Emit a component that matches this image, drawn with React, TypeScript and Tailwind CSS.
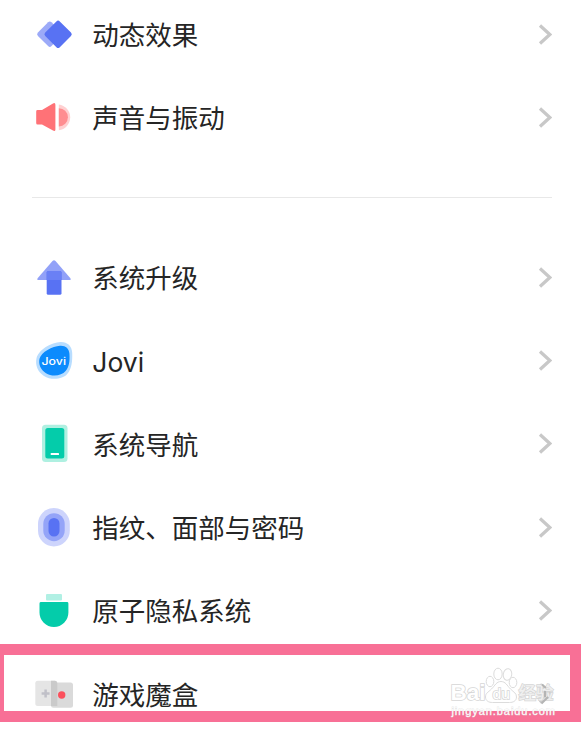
import * as React from 'react';

interface ISettingItem {
	id: number;
	name: string;
	icon: React.ReactNode;
}

interface ISettingGroupProps {
	items: ISettingItem[];
}

const MotionIcon = () => (
	<svg viewBox="0 0 40 40" className="w-10 h-10">
		<rect x="6.2" y="9.6" width="19.2" height="19.2" rx="2.4" fill="#9caaf8" transform="rotate(45 15.8 19.2)" />
		<rect x="13.8" y="9" width="20.6" height="20.6" rx="2.4" fill="#5872f3" transform="rotate(45 24.1 19.3)" />
	</svg>
);

const SoundIcon = () => (
	<svg viewBox="0 0 40 40" className="w-10 h-10">
		<path d="M24.8 6.4a13 13 0 0 1 0 25.8z" fill="#ffd0d1" />
		<path d="M24.8 10.2a9.1 9.1 0 0 1 0 18.2z" fill="#ff8d90" />
		<path d="M3.5 12H8L19 5.4q2.4-1 2.4 1.4v24.6q0 2.2-2.4 1.2L8 26.5H3.5Q2.2 26.5 2.2 25V13.4Q2.2 12 3.5 12z" fill="#ff7277" />
	</svg>
);

const UpgradeIcon = () => (
	<svg viewBox="0 0 40 40" className="w-10 h-10">
		<path d="M18.5 3q1.5-1.4 3 0L36.4 20.2q1 1.9-1 1.9H4.6q-2 0-1-1.9z" fill="#92a1f8" />
		<rect x="12.7" y="13" width="14.8" height="23.8" rx="1.6" fill="#5872f3" />
		<path d="M12.7 14.6q0-1.6 1.6-1.6h11.6q1.6 0 1.6 1.6v7.5H12.7z" fill="#6a80f5" />
	</svg>
);

const JoviIcon = () => (
	<svg viewBox="0 0 40 40" className="w-10 h-10">
		<path d="M26.5 1C33 .7 38 4.8 38.2 11.8c.4 9-.8 16.5-4.8 21C29 38.4 17 39.600 10 35 3.800 31 1 24.100 2.500 17.300 4.400 8.800 17.500 1.400 26.500 1z" fill="#b8ddff" />
		<path d="M26 4.700c5.500-.4 8.900 2.500 9.400 7.800.6 7.800-.4 13.400-3.800 17.600-4 4.900-13.600 6-19.600 2.100C6.500 28.700 4.300 23.300 5.500 17.800 7.100 11.100 18.600 5.100 26 4.700z" fill="#0c8bfd" />
		<text x="7.500" y="24" fill="#fff" fontFamily="Inter, sans-serif" fontWeight="500" fontSize="10.500" textLength="24.500" lengthAdjust="spacingAndGlyphs">
			Jovi
		</text>
	</svg>
);

const NavigationIcon = () => (
	<svg viewBox="0 0 40 40" className="w-10 h-10">
		<rect x="8" y="0.700" width="25.500" height="37.300" rx="3.500" fill="#aff0e1" />
		<rect x="11.300" y="4" width="19" height="30.600" rx="2.500" fill="#04ccaa" />
		<rect x="16.700" y="29" width="8.300" height="2" rx="0.600" fill="#fff" />
	</svg>
);

const FingerprintIcon = () => (
	<svg viewBox="0 0 40 40" className="w-10 h-10">
		<rect x="4" y="0" width="31.800" height="38.400" rx="15.900" fill="#cdd4fc" />
		<rect x="9.300" y="5.200" width="21.400" height="28" rx="10.700" fill="#94a4f8" />
		<rect x="14.500" y="9.900" width="11" height="18.600" rx="5.500" fill="#5872f3" />
	</svg>
);

const PrivacyIcon = () => (
	<svg viewBox="0 0 40 40" className="w-10 h-10">
		<rect x="12" y="3" width="16" height="6.600" rx="1" fill="#b1f0e4" />
		<path d="M7 11h26q1.400 0 1.400 1.400v9.200a14.450 14.450 0 0 1-28.900 0v-9.200Q5.500 11 7 11z" fill="#04ccaa" />
	</svg>
);

const GameIcon = () => (
	<svg viewBox="0 0 40 40" className="w-10 h-10">
		<rect x="1.300" y="6.700" width="22" height="25.200" rx="2.500" fill="#e5e5e5" />
		<rect x="17" y="8.500" width="22" height="25.200" rx="2.500" fill="#dadada" />
		<path d="M17 6.700h4q2.300 0 2.300 2.500v22.700H17z" fill="#cacaca" />
		<path d="M11.600 15.500v8M7.600 19.500h8" stroke="#c0c0c8" strokeWidth="2.500" />
		<circle cx="27.700" cy="21" r="3.700" fill="#fb505c" />
	</svg>
);

const Chevron = () => (
	<svg viewBox="0 0 14 22" className="w-[14px] h-[22px]" fill="none">
		<path d="M2 1.500 11.800 10.500 2 19.500" stroke="#c8c8c8" strokeWidth="3.200" />
	</svg>
);

const displaySettings: ISettingItem[] = [
	{ id: 1, name: '动态效果', icon: <MotionIcon /> },
	{ id: 2, name: '声音与振动', icon: <SoundIcon /> },
];

const systemSettings: ISettingItem[] = [
	{ id: 3, name: '系统升级', icon: <UpgradeIcon /> },
	{ id: 4, name: 'Jovi', icon: <JoviIcon /> },
	{ id: 5, name: '系统导航', icon: <NavigationIcon /> },
	{ id: 6, name: '指纹、面部与密码', icon: <FingerprintIcon /> },
	{ id: 7, name: '原子隐私系统', icon: <PrivacyIcon /> },
	{ id: 8, name: '游戏魔盒', icon: <GameIcon /> },
];

const SettingGroup: React.FunctionComponent<ISettingGroupProps> = ({ items = [] }) => {
	return (
		<ul>
			{items.map((item) => (
				<li key={item.id} className="flex items-center h-[83.3px] pl-[34px] pr-9">
					{item.icon}
					<span className="flex-1 ml-[18.3px] pt-px text-[26.500px] leading-10 text-[#252525] whitespace-nowrap">
						{item.name}
					</span>
					<Chevron />
				</li>
			))}
		</ul>
	);
};

const Watermark = () => (
	<svg viewBox="0 0 112 54" className="absolute left-[448px] top-[666px] w-[112px] h-[54px]">
		<g fill="#fff" stroke="#dcdcdc" strokeWidth="1">
			<path d="M53 15.500c4.500 0 6 4 9.500 7.500s6 4 6 8c0 4-3.500 5.500-7 5.500h-17c-3.500 0-7-1.500-7-5.500s2.500-4.500 6-8 5-7.500 9.500-7.500z" />
			<ellipse cx="42" cy="15.500" rx="3.800" ry="5.200" />
			<ellipse cx="50" cy="8" rx="4.200" ry="5.800" />
			<ellipse cx="59.500" cy="8.500" rx="4.200" ry="5.800" transform="rotate(10 59.500 8.500)" />
			<ellipse cx="65" cy="16.500" rx="3.800" ry="5.200" />
		</g>
		<g fontWeight="bold" stroke="#d6d6d6" strokeWidth="1.500" paintOrder="stroke" fill="#fff">
			<text x="2.500" y="34" fontFamily="'Liberation Sans', sans-serif" fontSize="22" textLength="35" lengthAdjust="spacingAndGlyphs">
				Bai
			</text>
			<text x="44.500" y="32.500" fontFamily="'Liberation Sans', sans-serif" fontSize="15" fontWeight="normal" textLength="17.500" lengthAdjust="spacingAndGlyphs">
				du
			</text>
			<text x="70.500" y="32.500" fontFamily="'Noto Sans CJK SC', sans-serif" fontSize="17" fontWeight="500" textLength="35" lengthAdjust="spacingAndGlyphs" fillOpacity="0.650">
				经验
			</text>
		</g>
		<path d="M94 18.500 98 22M100 31l-6.500 6.500M97 25v6" stroke="#b4b4b4" strokeWidth="2" fill="none" />
		<text x="3.500" y="48.500" fontFamily="'Liberation Sans', sans-serif" fontSize="11" fill="#fff" stroke="#d8d8d8" strokeOpacity="0.600" strokeWidth="0.900" paintOrder="stroke" textLength="103.500">
			jingyan.baidu.com
		</text>
	</svg>
);

const App: React.FunctionComponent = () => {
	return (
		<div className="relative w-[588px] h-[732px] overflow-hidden bg-white font-['Inter','Noto_Sans_CJK_SC',sans-serif]">
			<main className="flex flex-col -mt-[7px]">
				<SettingGroup items={displaySettings} />
				<hr className="mt-[37px] mb-[38.500px] ml-8 w-[520px] border-t border-[#e8e8e8]" />
				<SettingGroup items={systemSettings} />
			</main>
			<div className="absolute left-0 top-[644px] w-[581px] h-[78px] border-[11px] border-l-4 border-[#f87096]" />
			<Watermark />
		</div>
	);
};

export default App;
